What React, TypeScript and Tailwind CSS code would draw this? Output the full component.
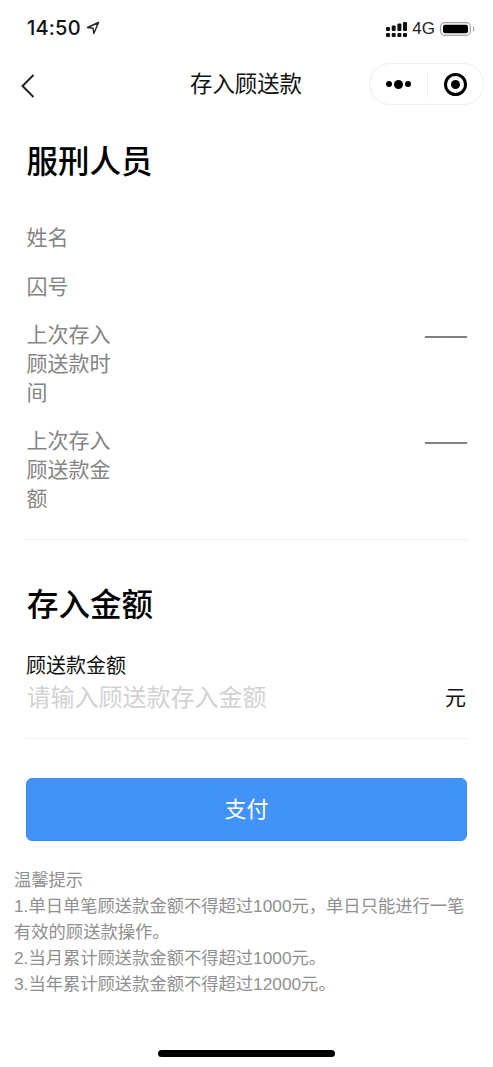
const font = "font-['Liberation_Sans','Noto_Sans_CJK_SC',sans-serif]";

function InfoRow({ label, value, className }: { label: string; value?: string; className: string }) {
  return (
    <div className={`flex justify-between text-[21px] leading-[29px] ${className}`}>
      <div className="w-[85px] text-[#858585] pl-[0.5px]">{label}</div>
      {value && <div className="font-bold text-[#7f7f7f]">{value}</div>}
    </div>
  );
}

export default function App() {
  return (
    <div className={`${font} relative w-[493px] h-[1067px] overflow-hidden bg-white text-black`}>
      <div className="flex items-center justify-between h-[58px] pl-[27px] pr-[18px]">
        <div className="flex items-center gap-[5px] -mt-[3px]">
          <span className="font-['Inter'] text-[20px] font-medium tracking-[0.2px] text-[#111]">14:50</span>
          <svg width="14" height="14" viewBox="0 0 14 14" fill="none" stroke="#222" strokeWidth="1.4" strokeLinejoin="round">
            <path d="M12.5 1.5 L1.5 6.5 L7 7.2 L7.8 12.5 Z" />
          </svg>
        </div>
        <div className="flex items-center gap-[5px]">
          <svg width="21" height="15" viewBox="0 0 21 15" fill="#111">
            <rect x="0" y="5" width="4" height="4" rx="1" />
            <rect x="5.7" y="3.5" width="4" height="5.5" rx="1" />
            <rect x="11.4" y="1.5" width="4" height="7.5" rx="1" />
            <rect x="17" y="0" width="4" height="9" rx="1" />
            <rect x="0" y="11" width="4" height="4" rx="1" />
            <rect x="5.7" y="11" width="4" height="4" rx="1" />
            <rect x="11.4" y="11" width="4" height="4" rx="1" />
            <rect x="17" y="11" width="4" height="4" rx="1" />
          </svg>
          <span className="text-[17px] text-[#222]">4G</span>
          <svg width="35" height="14" viewBox="0 0 35 14" fill="none">
            <rect x="0.7" y="0.7" width="29.6" height="12.6" rx="3.8" stroke="#a0a0a0" strokeWidth="1.2" />
            <rect x="3" y="2.7" width="25" height="8.6" rx="2" fill="#000" />
            <path d="M33 5 C34 5.6 34 8.4 33 9" stroke="#a0a0a0" strokeWidth="1.2" />
          </svg>
        </div>
      </div>

      <div className="relative flex items-center justify-center h-[54px]">
        <svg className="absolute left-[20px] top-[15px]" width="16" height="26" viewBox="0 0 16 26" fill="none" stroke="#222" strokeWidth="2">
          <path d="M13.5 2 L2.5 13 L13.5 24" />
        </svg>
        <div className="-ml-[1px] text-[22.4px] text-[#111]">存入顾送款</div>
        <div className="absolute left-[369px] top-[5px] flex items-center w-[115px] h-[42px] rounded-full border border-[#efefef]">
          <div className="flex items-center justify-center w-[57px] gap-[2px]">
            <span className="w-[6px] h-[6px] rounded-full bg-black" />
            <span className="w-[9px] h-[9px] rounded-full bg-black" />
            <span className="w-[6px] h-[6px] rounded-full bg-black" />
          </div>
          <div className="w-px h-[25px] bg-[#eeeeee]" />
          <div className="flex items-center justify-center flex-1">
            <div className="flex items-center justify-center w-[23px] h-[23px] rounded-full border-[3px] border-black">
              <span className="w-[9px] h-[9px] rounded-full bg-black" />
            </div>
          </div>
        </div>
      </div>

      <div className="px-[26px]">
        <h1 className="mt-[28px] pl-[0.5px] text-[31.5px] leading-[44px] font-medium">服刑人员</h1>
        <InfoRow label="姓名" className="mt-[39px]" />
        <InfoRow label="囚号" className="mt-[20px]" />
        <InfoRow label="上次存入顾送款时间" value="——" className="mt-[19px]" />
        <InfoRow label="上次存入顾送款金额" value="——" className="mt-[19px]" />
        <div className="mt-[26px] h-px bg-[#f2f2f2]" />

        <h1 className="mt-[43px] pl-[1px] text-[31.5px] leading-[44px] font-medium">存入金额</h1>
        <div className="mt-[25px] text-[20px] leading-[28px] text-[#111]">顾送款金额</div>
        <div className="flex items-center justify-between h-[36px]">
          <span className="pl-[0.5px] text-[24px] text-[#d2d2d2]">请输入顾送款存入金额</span>
          <span className="text-[21px] text-[#111] mr-[1px]">元</span>
        </div>
        <div className="mt-[22px] h-px bg-[#f2f2f2]" />

        <button className="flex items-center justify-center w-full h-[63px] mt-[39px] rounded-[6px] bg-[#4193f7] border border-[#3a8cf2] text-[22px] text-white">
          支付
        </button>
      </div>

      <div className="mt-[26px] px-[14px] text-[17.3px] leading-[26px] text-[#8f8f8f]">
        <div>温馨提示</div>
        <div>1.单日单笔顾送款金额不得超过1000元，单日只能进行一笔有效的顾送款操作。</div>
        <div>2.当月累计顾送款金额不得超过1000元。</div>
        <div>3.当年累计顾送款金额不得超过12000元。</div>
      </div>

      <div className="absolute left-[158px] top-[1050px] w-[177px] h-[7px] rounded-full bg-black" />
    </div>
  );
}
